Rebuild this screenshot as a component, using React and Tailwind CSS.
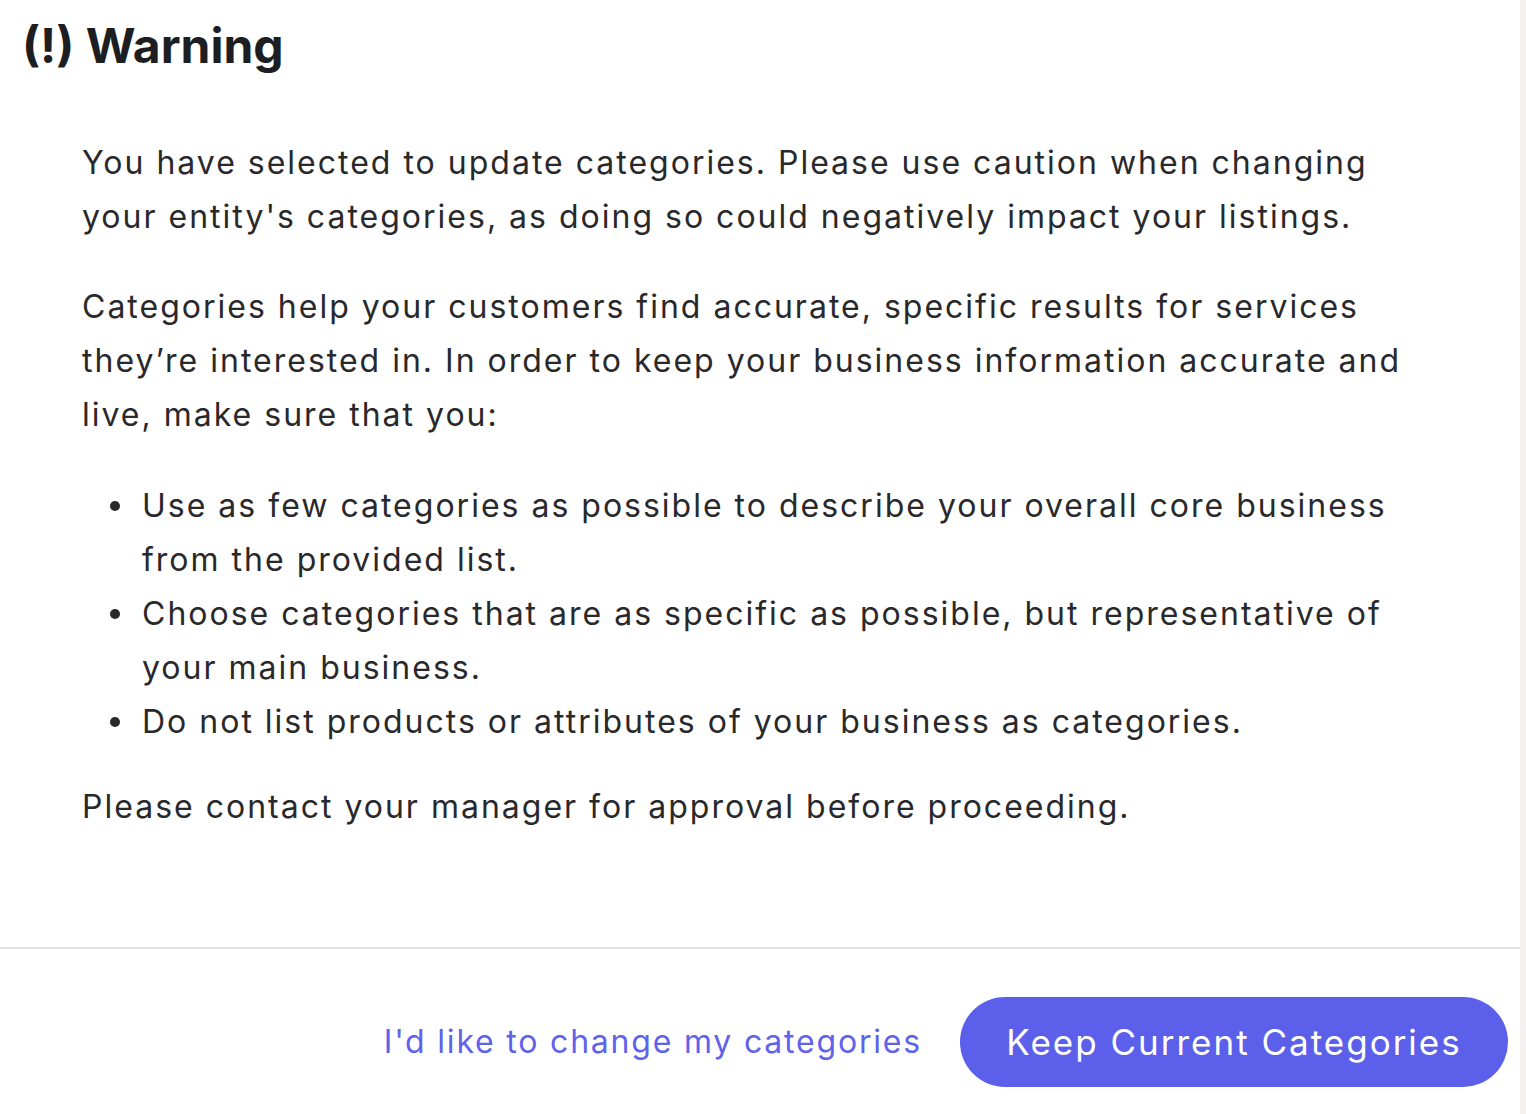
const bullets = [
  "Use as few categories as possible to describe your overall core business from the provided list.",
  "Choose categories that are as specific as possible, but representative of your main business.",
  "Do not list products or attributes of your business as categories.",
];

export default function App() {
  return (
    <div className="flex min-h-[1114px] w-full bg-white" style={{ fontFamily: 'Inter, "Noto Sans", sans-serif' }}>
      <div className="flex w-[1520px] flex-col bg-white">
        <div className="px-[22px] pt-[18px]">
          <h1 className="text-[48px] font-bold leading-[56px] text-[#1d1e21]">(!) Warning</h1>
        </div>
        <div className="w-[1412px] pl-[82px] pt-[62px] text-[32px] leading-[54px] tracking-[2px] text-[#29292c]">
          <p>
            You have selected to update categories. Please use caution when changing your entity's categories, as doing so could negatively impact your listings.
          </p>
          <p className="mt-[36px]">
            Categories help your customers find accurate, specific results for services they’re interested in. In order to keep your business information accurate and live, make sure that you:
          </p>
          <ul className="mt-[37px] flex flex-col">
            {bullets.map((b) => (
              <li key={b} className="flex">
                <span className="flex h-[54px] w-[60px] shrink-0 items-center pl-[28px]">
                  <span className="h-[10px] w-[10px] rounded-full bg-[#29292c]" />
                </span>
                <span>{b}</span>
              </li>
            ))}
          </ul>
          <p className="mt-[31px]">Please contact your manager for approval before proceeding.</p>
        </div>
        <div className="mt-[113px] h-[2px] w-full bg-[#e2e2e6]" />
        <div className="flex items-center justify-end gap-[38px] pr-[12px] pt-[48px]">
          <button className="text-[32px] leading-[40px] tracking-[1.8px] text-[#5f63ea]">I'd like to change my categories</button>
          <button className="h-[90px] w-[548px] rounded-full bg-[#5b5fe9] text-[35px] tracking-[2px] text-white">
            Keep Current Categories
          </button>
        </div>
      </div>
      <div className="w-[6px] bg-[#f2f1ef]" />
    </div>
  );
}
